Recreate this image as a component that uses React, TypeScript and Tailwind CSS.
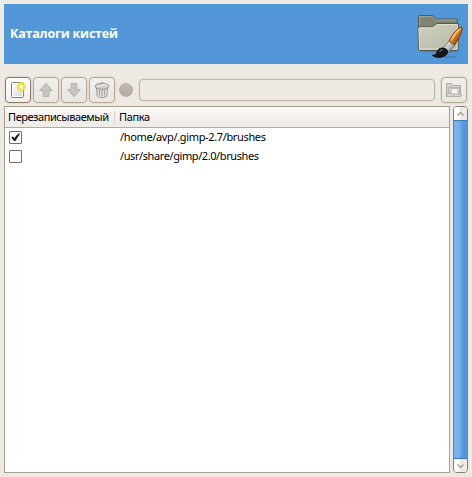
import React from "react";

function ToolButton({ active, children, className = "" }: { active?: boolean; children: React.ReactNode; className?: string }) {
  return (
    <button
      className={`flex h-[26px] w-[26px] shrink-0 items-center justify-center rounded-[4px] border shadow-[0_0_0_1px_#e3dcd4] ${
        active
          ? "border-[#8b7a6b] bg-linear-to-b from-white to-[#f1eeea]"
          : "border-[#b8a999] bg-linear-to-b from-[#f2efeb] to-[#e9e5df]"
      } ${className}`}
    >
      {children}
    </button>
  );
}

function NewIcon() {
  return (
    <svg width="16" height="16" viewBox="0 0 16 16">
      <defs>
        <linearGradient id="paper" x2="1" y2="1">
          <stop stopColor="#fff" />
          <stop offset="1" stopColor="#d6d6d6" />
        </linearGradient>
      </defs>
      <rect x="1.5" y=".5" width="12" height="15" rx="1" fill="#fff" stroke="#7e8078" />
      <rect x="3" y="2" width="9" height="12" fill="url(#paper)" />
      <circle cx="11.3" cy="4.7" r="4.7" fill="#f3df20" opacity=".75" />
      <path d="M11.3 .9l1.2 2.3 2.6.4-1.9 1.8.5 2.6-2.4-1.3L9 8l.4-2.6-1.9-1.8 2.6-.4z" fill="#fffef0" stroke="#eed500" strokeWidth=".6" />
    </svg>
  );
}

function ArrowIcon({ down }: { down?: boolean }) {
  return (
    <svg width="16" height="16" viewBox="0 0 16 16" className={down ? "rotate-180" : ""}>
      <path d="M8 1.3L14.4 8.5h-3.5v5.9H5.1V8.5H1.6z" fill="#c6c5c2" stroke="#b3b1ad" strokeLinejoin="round" />
    </svg>
  );
}

function TrashIcon() {
  return (
    <svg width="16" height="16" viewBox="0 0 16 16">
      <path d="M2.4 5l.7 9c1.4 2 8.4 2 9.8 0l.7-9z" fill="#dfdeda" stroke="#a09d98" />
      <path d="M5.4 7.5l.3 6M8 8v6M10.6 7.5l-.3 6" stroke="#a5a39f" />
      <ellipse cx="8" cy="4.3" rx="6.9" ry="3" fill="#cfcdc9" stroke="#9b9893" />
      <path d="M3.3 4.4C5 2.9 7 4.8 8.4 3.4s3.3-.8 4 .7" fill="none" stroke="#f3f2ef" strokeWidth="1.2" />
      <path d="M5.5 2.2c1-1.8 4-1.7 5-.2" fill="none" stroke="#a19e99" />
    </svg>
  );
}

function OpenFolderIcon() {
  return (
    <svg width="18" height="18" viewBox="0 0 18 18" className="shrink-0">
      <path d="M1.5 15.5V2.5h5l1 2h8v11z" fill="#d0cfcc" stroke="#b1aeaa" />
      <path d="M3.5 12V6.5h11V12" fill="#d9d8d5" stroke="#b8b5b1" />
      <path d="M6 7.5h7v6H6z" fill="#f5f4f2" stroke="#bbb8b4" />
      <path d="M1.5 15.5L3 12h3.5l1 1h9l-1 2.5z" fill="#d6d5d2" stroke="#b1aeaa" />
    </svg>
  );
}

function BrushFolderIcon() {
  return (
    <svg width="48" height="48" viewBox="0 0 48 48">
      <defs>
        <linearGradient id="folder" x2=".8" y2="1">
          <stop stopColor="#cfd0c0" />
          <stop offset="1" stopColor="#b8baa8" />
        </linearGradient>
        <linearGradient id="handle" x1=".2" y1=".2" x2=".8" y2=".8">
          <stop stopColor="#ffc574" />
          <stop offset=".45" stopColor="#dd8426" />
          <stop offset="1" stopColor="#753600" />
        </linearGradient>
        <linearGradient id="ferrule" x2="1" y2="1">
          <stop stopColor="#fff" />
          <stop offset=".5" stopColor="#c3c4c1" />
          <stop offset="1" stopColor="#666965" />
        </linearGradient>
      </defs>
      <ellipse cx="22" cy="39" rx="20" ry="1.4" fill="#294c6e" opacity=".3" />
      <path d="M1.5 34V4.5q0-1 1-1H15q1 0 1.6 1l2 2.5H39.5q1 0 1 1v25z" fill="#7f8476" stroke="#555a50" />
      <path d="M2.6 14V4.6h12.6l2.8 3.5h21.5" fill="none" stroke="#a0a595" />
      <path d="M1.5 37.3l-.5-21q0-1.4 1.3-1.4h13.2l4.2-3.4h20.5q1.5 0 1.4 1.4l-.5 24.4q0 1.2-1.2 1.2H2.7q-1.2 0-1.2-1.2z" fill="url(#folder)" stroke="#555a50" />
      <path d="M2.5 37l-.4-20.3q0-.8.8-.8h13l4.2-3.4h19.6q.7 0 .7.7L40 37z" fill="none" stroke="#dcdece" />
      <ellipse cx="31" cy="45" rx="9" ry="1.5" fill="#183f68" opacity=".2" />
      <path d="M32 29.5C34.5 23.5 39 17.5 43.5 15.3q1.9-.5 1.7 1.5C44 22.5 41 28.5 37.3 33.3z" fill="url(#handle)" stroke="#76410f" />
      <path d="M34.3 28q3.5-7 9-11.2" fill="none" stroke="#ffca85" strokeWidth="1.2" />
      <path d="M32 29.2l5.6 4.5-6.6 6.9-5.2-4.2z" fill="url(#ferrule)" stroke="#60645e" strokeWidth=".8" />
      <path d="M25.4 36.1c-2.5 0-4.8 1.5-5.3 3.9-.5 2.5-2.4 3.2-4.7 3.4 3.4 2.5 9 2.3 12.1.5 2.4-1.4 3.7-3 3-4.9-.7-1.7-2.7-2.8-5.1-2.9z" fill="#151817" stroke="#050606" />
      <path d="M22.5 39.8q1-2 2.9-2.2" fill="none" stroke="#6f7371" strokeWidth="1.2" />
    </svg>
  );
}

function DirectoryRow({ path, checked, width }: { path: string; checked?: boolean; width: string }) {
  return (
    <div className="flex h-[19px] items-center">
      <div className="flex w-[115px] items-center pl-1">
        <span className="flex h-[13px] w-[13px] items-center justify-center rounded-[1px] border border-[#7b6b5d] bg-white">
          {checked && (
            <svg width="11" height="11" viewBox="0 0 11 11">
              <path d="M1.6 5.4l1.4-.6 1.6 1.9C5.7 4.3 7.2 2.6 9.3 1.6l.4.5C8 4 6.6 6.3 5.4 8.8H4z" fill="#111" stroke="#111" strokeWidth=".5" />
            </svg>
          )}
        </span>
      </div>
      <svg width="200" height="18">
        <text x="0" y="12" textLength={width} lengthAdjust="spacing" fontSize="11" fill="#000">{path}</text>
      </svg>
    </div>
  );
}

function ScrollArrow({ down }: { down?: boolean }) {
  return (
    <button className="flex h-[13px] w-full shrink-0 items-center justify-center bg-linear-to-r from-white from-50% to-[#eeeae5] to-50%">
      <svg width="9" height="6" viewBox="0 0 9 6" className={down ? "rotate-180" : ""}>
        <path d="M1.5 4.5l3-3 3 3" fill="none" stroke="#a89c90" strokeWidth="1.3" />
      </svg>
    </button>
  );
}

export default function App() {
  return (
    <main className="flex h-[477px] w-[472px] flex-col bg-[#ede9e3] p-1 font-['Noto_Sans','Open_Sans',sans-serif] text-[11px] text-black">
      <header className="flex h-[60px] shrink-0 items-center justify-between bg-[#5397d8] pl-1.5 pr-[3px]">
        <svg width="120" height="20">
          <text x="0" y="14" fontSize="12.5" fontWeight="700" fill="#fff" textLength="108" lengthAdjust="spacing" className="font-['Open_Sans','Noto_Sans',sans-serif]">Каталоги кистей</text>
        </svg>
        <div className="pt-1"><BrushFolderIcon /></div>
      </header>
      <div className="flex h-[42px] shrink-0 items-center pl-px pt-2.5">
        <div className="flex gap-0.5">
          <ToolButton active><NewIcon /></ToolButton>
          <ToolButton><ArrowIcon /></ToolButton>
          <ToolButton><ArrowIcon down /></ToolButton>
          <ToolButton><TrashIcon /></ToolButton>
        </div>
        <span className="ml-1 h-[14px] w-[14px] rounded-full border border-[#b9aeaa] bg-linear-to-b from-[#c2b7b5] to-[#b5aaa8]" />
        <div className="ml-[6px] h-[22px] w-[296px] rounded-[4px] border border-[#c2b5a6] bg-[#ede9e3] shadow-[0_0_0_1px_#e7e1d9]" />
        <ToolButton className="ml-1.5"><OpenFolderIcon /></ToolButton>
      </div>
      <div className="flex h-[367px] justify-between">
        <section className="w-[446px] border border-[#a99e8b] bg-white">
          <div className="flex h-[21px] items-center border-b border-[#b6a996] bg-linear-to-b from-[#fbfaf9] via-[#f2efec] to-[#efece8]">
            <div className="flex h-[13px] w-[110px] items-center border-r border-[#d5cec6] pl-[3px]">
              <svg width="106" height="18" className="shrink-0">
                <text x="0" y="13" fontSize="11" textLength="101" lengthAdjust="spacing">Перезаписываемый</text>
              </svg>
            </div>
            <svg width="60" height="18" className="ml-1">
              <text x="0" y="13" fontSize="11" textLength="31" lengthAdjust="spacing">Папка</text>
            </svg>
          </div>
          <DirectoryRow checked path="/home/avp/.gimp-2.7/brushes" width="146" />
          <DirectoryRow path="/usr/share/gimp/2.0/brushes" width="139" />
        </section>
        <aside className="flex w-[15px] flex-col overflow-hidden rounded-[4px] border border-[#8b7d6d]">
          <ScrollArrow />
          <div className="grow border-y border-[#3f76ad] bg-linear-to-r from-[#76b2ed] from-35% to-[#5397d8] to-75%" />
          <ScrollArrow down />
        </aside>
      </div>
    </main>
  );
}
